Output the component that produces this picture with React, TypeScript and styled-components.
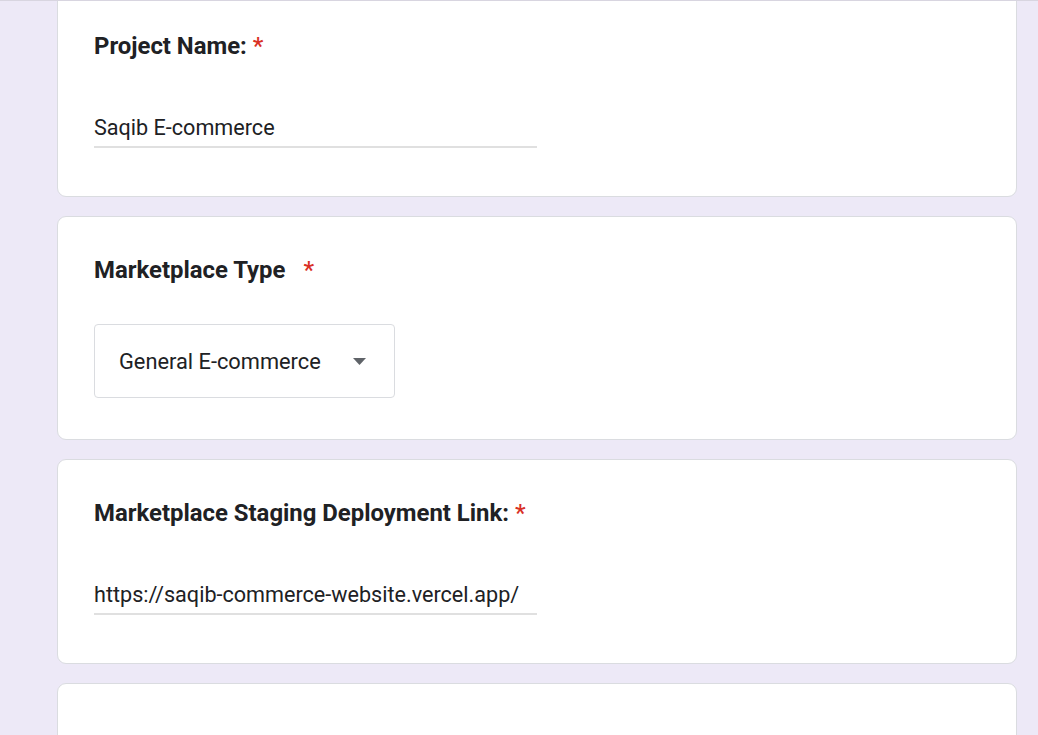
import React from "react";
import styled, { createGlobalStyle } from "styled-components";

const Global = createGlobalStyle`
  html, body { margin: 0; padding: 0; }
  body {
    background: #ede9f7;
    font-family: Roboto, "Liberation Sans", Arial, sans-serif;
    color: #202124;
    overflow: hidden;
  }
`;

const Page = styled.div`
  min-height: 735px;
  border-top: 1px solid #d8d5e0;
  box-sizing: border-box;
  overflow: hidden;
`;

const List = styled.div`
  display: flex;
  flex-direction: column;
  gap: 19px;
  width: 960px;
  margin: -9px 0 0 57px;
`;

const Card = styled.section<{ $bottom: number }>`
  background: #ffffff;
  border: 1px solid #dadce0;
  border-radius: 9px;
  padding: 36px 36px ${(p) => p.$bottom}px;
  min-height: 120px;
`;

const Title = styled.div`
  font-size: 23.9px;
  line-height: 34px;
  font-weight: 700;
  color: #202124;
  white-space: nowrap;
`;

const Star = styled.span<{ $gap: number }>`
  color: #d93025;
  margin-left: ${(p) => p.$gap}px;
  font-weight: 500;
`;

const TextAnswer = styled.div`
  margin-top: 50px;
  width: 443px;
  font-size: 21.6px;
  line-height: 30px;
  padding-bottom: 3px;
  border-bottom: 2px solid #e0e0e0;
  color: #202124;
  white-space: nowrap;
`;

const Select = styled.div`
  margin-top: 37px;
  width: 301px;
  height: 74px;
  box-sizing: border-box;
  border: 1px solid #dadce0;
  border-radius: 4px;
  display: flex;
  align-items: center;
  justify-content: space-between;
  padding: 0 28px 0 24px;
  font-size: 21.8px;
  color: #202124;
`;

const Caret = styled.svg`
  width: 13px;
  height: 7px;
  display: block;
`;

export default function App() {
  return (
    <>
      <Global />
      <Page>
        <List>
          <Card $bottom={47}>
            <Title>
              Project Name:<Star $gap={6}>*</Star>
            </Title>
            <TextAnswer>Saqib E-commerce</TextAnswer>
          </Card>
          <Card $bottom={41}>
            <Title>
              Marketplace Type<Star $gap={18}>*</Star>
            </Title>
            <Select>
              <span>General E-commerce</span>
              <Caret viewBox="0 0 13 7">
                <path d="M0 0 L13 0 L6.5 7 Z" fill="#5f6368" />
              </Caret>
            </Select>
          </Card>
          <Card $bottom={47}>
            <Title>
              Marketplace Staging Deployment Link:<Star $gap={6}>*</Star>
            </Title>
            <TextAnswer>https://saqib-commerce-website.vercel.app/</TextAnswer>
          </Card>
          <Card $bottom={47} />
        </List>
      </Page>
    </>
  );
}
